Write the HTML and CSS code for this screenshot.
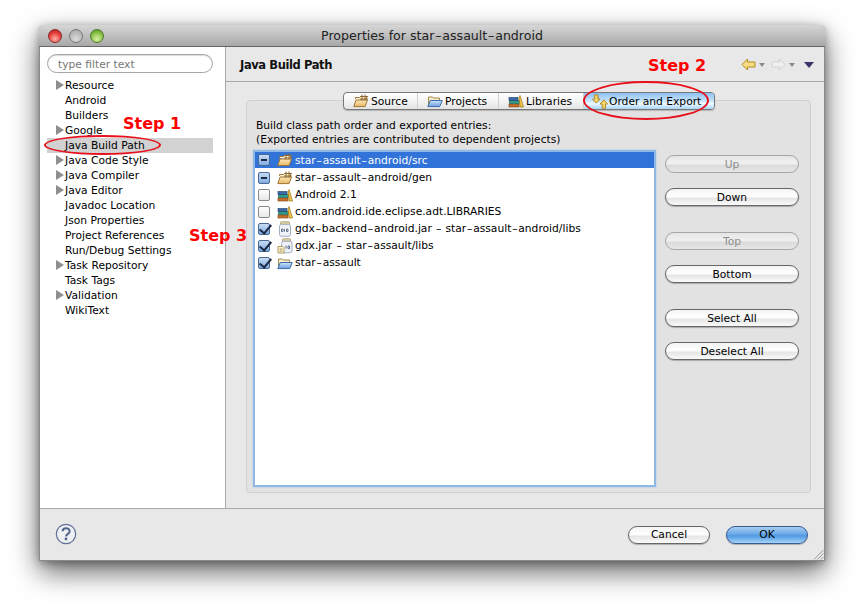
FILE: index.html
```html
<!DOCTYPE html>
<html lang="en">
<head>
<meta charset="utf-8">
<title>Properties for star-assault-android</title>
<link rel="stylesheet" href="styles.css">
</head>
<body>
<svg class="defs" width="0" height="0">
  <defs>
    <linearGradient id="fold" x1="0" y1="0" x2="0" y2="1"><stop offset="0" stop-color="#fde9b8"/><stop offset="1" stop-color="#e8b765"/></linearGradient>
    <linearGradient id="bfold" x1="0" y1="0" x2="0" y2="1"><stop offset="0" stop-color="#cfe2fa"/><stop offset="1" stop-color="#6d9fe0"/></linearGradient>
    <symbol id="i-src" viewBox="0 0 16 14">
      <path d="M2.500 5V3.500h4l1-1h6V7" fill="#fff3d2" stroke="#a0773a"/>
      <path d="M.8 12.600 3 6h11.500l-2.400 6.600z" fill="url(#fold)" stroke="#a0773a"/>
      <path d="M9 .5v6M12 .5v6M7 2.500h8M7 5h8" stroke="#8c6a30" fill="none"/>
    </symbol>
    <symbol id="i-prj" viewBox="0 0 16 14">
      <path d="M1.500 12V3h4l1 1h6v3" fill="#f6edc8" stroke="#a08a50"/>
      <path d="M.8 12.600 3.300 6.500h12l-2.600 6.100z" fill="url(#bfold)" stroke="#3f6ea8"/>
    </symbol>
    <symbol id="i-lib" viewBox="0 0 16 14">
      <rect x="1" y="10" width="10" height="3" fill="#c96f2c" stroke="#7a4316" stroke-width=".6"/>
      <rect x="1.500" y="6.500" width="10" height="3" fill="#2f9a86" stroke="#17594d" stroke-width=".6"/>
      <rect x="1" y="3.500" width="9" height="3" fill="#3a6aa8" stroke="#1f3e68" stroke-width=".6"/>
      <path d="M12 1.500 15.500 13h-3.400L11 4z" fill="#f4c54a" stroke="#9a7418" stroke-width=".7"/>
    </symbol>
    <symbol id="i-jar" viewBox="0 0 16 16">
      <rect x="3.500" y=".8" width="9" height="2.500" rx=".8" fill="#e8dcae" stroke="#9b8f60" stroke-width=".8"/>
      <rect x="2.500" y="3.300" width="11" height="12" rx="2" fill="#eef2f8" stroke="#8a9bb2" stroke-width=".8"/>
      <rect x="3" y="7" width="10" height="4.500" fill="#fff"/>
      <path d="M4.500 8h1.500v2.600H4.500zM7.500 7.800v3M9.500 8h1.500v2.600H9.500z" fill="none" stroke="#3c4f78" stroke-width=".8"/>
    </symbol>
    <symbol id="i-jar2" viewBox="0 0 16 16">
      <rect x="5.500" y=".8" width="8" height="2.500" rx=".8" fill="#e8dcae" stroke="#9b8f60" stroke-width=".8"/>
      <rect x="4.500" y="3.300" width="10.500" height="11.500" rx="2" fill="#eef2f8" stroke="#8a9bb2" stroke-width=".8"/>
      <path d="M9 7.600v3M11 8h1.500v2.600H11z" fill="none" stroke="#3c4f78" stroke-width=".8"/>
      <path d="M1 8.500h5l1 1v5.500H1z" fill="#fff8d8" stroke="#a0873a" stroke-width=".8"/>
      <path d="M2.500 11h3M2.500 13h3" stroke="#7a6a30" stroke-width=".7"/>
    </symbol>
    <symbol id="i-order" viewBox="0 0 20 18">
      <path d="M3 1h4v5h2.500L5 11 .5 6H3z" fill="#f7d66a" stroke="#a57a14"/>
      <path d="M12 17v-5H9.500L14 7l4.500 5H16v5z" fill="#f7d66a" stroke="#a57a14"/>
    </symbol>
  </defs>
</svg>

<main class="window">
  <header class="titlebar">
    <div class="lights">
      <span class="light light-red"></span>
      <span class="light light-gray"></span>
      <span class="light light-green"></span>
    </div>
    <h1 class="title">Properties for star<span class="dash">–</span>assault<span class="dash">–</span>android</h1>
  </header>

  <div class="body">
    <aside class="sidebar">
      <div class="filter">type filter text</div>
      <ul class="tree">
        <li class="tree-row has-kids">Resource</li>
        <li class="tree-row">Android</li>
        <li class="tree-row">Builders</li>
        <li class="tree-row has-kids">Google</li>
        <li class="tree-row selected">Java Build Path</li>
        <li class="tree-row has-kids">Java Code Style</li>
        <li class="tree-row has-kids">Java Compiler</li>
        <li class="tree-row has-kids">Java Editor</li>
        <li class="tree-row">Javadoc Location</li>
        <li class="tree-row">Json Properties</li>
        <li class="tree-row">Project References</li>
        <li class="tree-row">Run/Debug Settings</li>
        <li class="tree-row has-kids">Task Repository</li>
        <li class="tree-row">Task Tags</li>
        <li class="tree-row has-kids">Validation</li>
        <li class="tree-row">WikiText</li>
      </ul>
    </aside>

    <section class="content">
      <div class="content-head">
        <h2 class="content-title">Java Build Path</h2>
        <div class="nav">
          <svg width="15" height="13" viewBox="0 0 15 13"><path d="M1 6.500 6.500 1v3H14v5H6.500v3z" fill="#f8dc84" stroke="#b08a1e"/></svg>
          <span class="caret"></span>
          <svg class="nav-next" width="15" height="13" viewBox="0 0 15 13"><path d="M14 6.500 8.500 1v3H1v5h7.500v3z" fill="#eef0ee" stroke="#cfd3cf"/></svg>
          <span class="caret"></span>
          <span class="menu-caret"></span>
        </div>
      </div>

      <div class="group">
        <div class="tabs">
          <div class="tab tab-source"><svg class="tab-icon" width="16" height="14"><use href="#i-src"/></svg>Source</div>
          <div class="tab tab-projects"><svg class="tab-icon" width="16" height="14"><use href="#i-prj"/></svg>Projects</div>
          <div class="tab tab-libs"><svg class="tab-icon" width="16" height="14"><use href="#i-lib"/></svg>Libraries</div>
          <div class="tab tab-order"><svg class="tab-icon" width="17" height="15"><use href="#i-order"/></svg>Order and Export</div>
        </div>
        <p class="intro">Build class path order and exported entries:<br>(Exported entries are contributed to dependent projects)</p>
        <div class="order-pane">
          <ul class="entries">
            <li class="entry entry-selected"><span class="check check-mixed"></span><svg class="entry-icon" width="16" height="14"><use href="#i-src"/></svg><span>star<span class="dash">–</span>assault<span class="dash">–</span>android/src</span></li>
            <li class="entry"><span class="check check-mixed"></span><svg class="entry-icon" width="16" height="14"><use href="#i-src"/></svg><span>star<span class="dash">–</span>assault<span class="dash">–</span>android/gen</span></li>
            <li class="entry"><span class="check"></span><svg class="entry-icon" width="16" height="14"><use href="#i-lib"/></svg><span>Android 2.1</span></li>
            <li class="entry"><span class="check"></span><svg class="entry-icon" width="16" height="14"><use href="#i-lib"/></svg><span>com.android.ide.eclipse.adt.LIBRARIES</span></li>
            <li class="entry"><span class="check check-on"></span><svg class="entry-icon" width="16" height="16"><use href="#i-jar"/></svg><span>gdx<span class="dash">–</span>backend<span class="dash">–</span>android.jar <span class="dash">–</span> star<span class="dash">–</span>assault<span class="dash">–</span>android/libs</span></li>
            <li class="entry"><span class="check check-on"></span><svg class="entry-icon" width="16" height="16"><use href="#i-jar2"/></svg><span>gdx.jar <span class="dash">–</span> star<span class="dash">–</span>assault/libs</span></li>
            <li class="entry"><span class="check check-on"></span><svg class="entry-icon" width="16" height="14"><use href="#i-prj"/></svg><span>star<span class="dash">–</span>assault</span></li>
          </ul>
          <div class="actions">
            <div class="btn-block">
              <button class="btn" disabled>Up</button>
              <button class="btn">Down</button>
            </div>
            <div class="btn-block">
              <button class="btn" disabled>Top</button>
              <button class="btn">Bottom</button>
            </div>
            <div class="btn-block">
              <button class="btn">Select All</button>
              <button class="btn">Deselect All</button>
            </div>
          </div>
        </div>
      </div>
    </section>
  </div>

  <footer class="footer">
    <svg class="help" width="22" height="22" viewBox="0 0 22 22">
      <circle cx="11" cy="11" r="9.700" fill="#eef0f4" stroke="#5f7196" stroke-width="1.200"/>
      <path d="M7.600 8.200c.2-4.200 7.200-4 7 .2 0 2.600-3.300 2.400-3.500 5" fill="none" stroke="#51648c" stroke-width="2"/>
      <circle cx="11" cy="16" r="1.400" fill="#51648c"/>
    </svg>
    <div class="footer-btns">
      <button class="btn btn-wide">Cancel</button>
      <button class="btn btn-wide btn-default">OK</button>
    </div>
    <svg class="grip" width="11" height="11" viewBox="0 0 11 11"><path d="M10.500 1 1 10.500M10.500 4.500 4.500 10.500M10.500 8 8 10.500" stroke="#9a9a9a" fill="none"/></svg>
  </footer>

  <span class="note note-1">Step 1</span>
  <span class="note note-2">Step 2</span>
  <span class="note note-3">Step 3</span>
  <span class="ring ring-1"></span>
  <span class="ring ring-2"></span>
</main>
</body>
</html>
```
FILE: styles.css
```css
* { box-sizing: border-box; }
html, body { margin: 0; height: 100%; }
body {
  background: #fff;
  padding: 25px 39px 54px;
  font-family: "DejaVu Sans", sans-serif;
  font-size: 10.7px;
  color: #000;
  overflow: hidden;
}
.defs { position: absolute; }
ul { list-style: none; margin: 0; padding: 0; }
h1, h2, p { margin: 0; font-weight: normal; }
.dash { padding: 0 .8px; }

.window {
  position: relative;
  width: 786px;
  height: 536px;
  display: flex;
  flex-direction: column;
  background: #e8e8e8;
  border: 1px solid #8a8a8a;
  border-top: 0;
  border-radius: 5px 5px 0 0;
  box-shadow: 0 11px 28px rgba(0,0,0,.6), 0 2px 8px rgba(0,0,0,.3);
}

.titlebar {
  height: 22px;
  flex: none;
  display: flex;
  align-items: center;
  position: relative;
  margin: 0 -1px;
  background: linear-gradient(#d6d6d6, #a8a8a8);
  border-bottom: 1px solid #666;
  border-radius: 5px 5px 0 0;
}
.lights { display: flex; gap: 7px; padding-left: 9px; }
.light { width: 14px; height: 14px; border-radius: 50%; border: 1px solid #777; }
.light-red { background: radial-gradient(circle at 50% 75%, #ffb0a8, #e23a36 60%, #a81e1c); border-color: #8a2a28; }
.light-gray { background: radial-gradient(circle at 50% 75%, #dcdcdc, #b4b4b4 70%, #9a9a9a); }
.light-green { background: radial-gradient(circle at 50% 75%, #d8f2a0, #86bf44 60%, #4f8a22); border-color: #4f7a2c; }
.title {
  position: absolute;
  left: 0; right: 0;
  text-align: center;
  font-size: 12.6px;
  color: #222;
}

.body { flex: 1; display: flex; min-height: 0; border-bottom: 1px solid #a8a8a8; }

.sidebar {
  width: 186px;
  flex: none;
  background: #fff;
  border-right: 1px solid #a8a8a8;
  padding: 7px 12px 0 7px;
}
.filter {
  height: 19px;
  border: 1px solid #a6a6a6;
  border-radius: 10px;
  box-shadow: inset 0 1px 1px rgba(0,0,0,.15);
  padding-left: 10px;
  line-height: 19px;
  color: #777;
}
.tree { margin-top: 5px; }
.tree-row {
  height: 15px;
  line-height: 15px;
  padding-left: 18px;
  position: relative;
  white-space: nowrap;
}
.tree-row.selected { background: #d2d2d2; }
.has-kids::before {
  content: "";
  position: absolute;
  left: 9px; top: 2px;
  border-left: 8px solid #8f8f8f;
  border-top: 5px solid transparent;
  border-bottom: 5px solid transparent;
}

.content { flex: 1; min-width: 0; display: flex; flex-direction: column; padding-bottom: 15px; }
.content-head {
  height: 35px;
  flex: none;
  display: flex;
  align-items: center;
  justify-content: space-between;
  padding: 1px 10px 0 14px;
  border-bottom: 1px solid #a8a8a8;
}
.content-title { font-size: 11.5px; font-weight: bold; letter-spacing: -.4px; color: #111; }
.nav { display: flex; align-items: center; gap: 3px; }
.nav-next { margin-left: 3px; }
.caret {
  border-top: 4px solid #8a8a8a;
  border-left: 3px solid transparent;
  border-right: 3px solid transparent;
}
.menu-caret {
  margin-left: 6px;
  border-top: 6px solid #3a3566;
  border-left: 5px solid transparent;
  border-right: 5px solid transparent;
}

.group {
  flex: 1;
  margin: 18px 13px 0 20px;
  padding: 0 9px;
  background: #e2e2e2;
  border: 1px solid #d0d0d0;
  border-radius: 4px;
  display: flex;
  flex-direction: column;
  min-height: 0;
}
.tabs {
  display: flex;
  height: 18px;
  margin: -9px 0 0 87px;
  align-self: flex-start;
  border: 1px solid #777;
  border-radius: 4px;
  background: linear-gradient(#fff, #f4f4f4 50%, #e4e4e4);
  box-shadow: 0 1px 1px rgba(0,0,0,.2);
}
.tab {
  display: flex;
  align-items: center;
  gap: 2px;
  padding-left: 9px;
  white-space: nowrap;
  border-right: 1px solid #cfcfcf;
}
.tab-source { width: 74px; }
.tab-projects { width: 81px; }
.tab-libs { width: 85px; }
.tab-order {
  width: 130px;
  padding-left: 8px;
  gap: 0;
  border-right: 0;
  background: linear-gradient(#8cc0f2, #cfe8fb 55%, #f0fbff 65%, #a9d4f8);
  border-radius: 0 3px 3px 0;
}
.tab-icon { flex: none; }

.intro { margin-top: 9px; line-height: 14px; }
.order-pane { flex: 1; min-height: 0; display: flex; margin: 3px 0 5px -3px; }
.entries {
  width: 403px;
  flex: none;
  background: #fff;
  border: 2px solid #8fb8e4;
  box-shadow: 0 0 2px #a8c6ea;
  padding-top: 0;
}
.entry {
  display: flex;
  align-items: center;
  height: 17px;
  padding-left: 3px;
  white-space: nowrap;
}
.entry-selected { background: #3173d8; color: #fff; height: 16px; margin-bottom: 1px; }
.check {
  width: 12px;
  height: 12px;
  margin-right: 7px;
  flex: none;
  border: 1px solid #8a8a8a;
  border-radius: 2px;
  background: linear-gradient(#fff, #e8e8e8);
  position: relative;
}
.check-mixed, .check-on { background: linear-gradient(#c8dcf4, #80ace2); border-color: #4a6a96; }
.check-mixed::after {
  content: "";
  position: absolute;
  left: 2px; right: 2px; top: 4px;
  height: 2px;
  background: #1e2a44;
}
.check-on::after {
  content: "";
  position: absolute;
  left: 3px; top: -2px;
  width: 5px; height: 10px;
  border: solid #1e2a44;
  border-width: 0 2px 2px 0;
  transform: rotate(40deg);
}
.entry-icon { margin-right: 2px; flex: none; }

.actions {
  flex: 1;
  padding: 5px 2px 0 9px;
  display: flex;
  flex-direction: column;
  gap: 26px;
}
.btn-block { display: flex; flex-direction: column; gap: 15px; }
.btn {
  display: block;
  width: 134px;
  height: 18px;
  padding: 0;
  font: inherit;
  color: #000;
  border: 1px solid #666;
  border-radius: 9px;
  background: linear-gradient(#f4f4f4, #fff 45%, #e6e6e6 60%, #fafafa);
  box-shadow: 0 1px 1px rgba(0,0,0,.25);
}
.btn:disabled {
  color: #8e8e8e;
  border-color: #a6a6a6;
  background: linear-gradient(#e6e6e6, #f0f0f0 45%, #dcdcdc 60%, #e6e6e6);
  box-shadow: none;
}

.footer {
  height: 51px;
  flex: none;
  display: flex;
  align-items: center;
  justify-content: space-between;
  padding: 0 16px 0 15px;
  position: relative;
}
.help { flex: none; margin-bottom: 2px; }
.footer-btns { display: flex; gap: 16px; }
.btn-wide { width: 82px; }
.btn-default {
  border-color: #3a5a94;
  background: linear-gradient(#a8cdf2, #6aa8e6 45%, #4f98e2 55%, #a4d4f8);
}
.grip { position: absolute; right: 0; bottom: 0; }

/* Annotations painted over the dialog */
.note {
  position: absolute;
  font-family: "DejaVu Sans", sans-serif;
  font-weight: bold;
  font-size: 16px;
  line-height: 20px;
  color: #f00;
  white-space: nowrap;
}
.note-1 { left: 83px; top: 89px; }
.note-2 { left: 608px; top: 31px; }
.note-3 { left: 149px; top: 201px; }
.ring {
  position: absolute;
  border: 2.5px solid #e8101c;
  border-radius: 50%;
}
.ring-1 { left: 4px; top: 110px; width: 117px; height: 20px; }
.ring-2 { left: 543px; top: 56px; width: 126px; height: 39px; }
```
